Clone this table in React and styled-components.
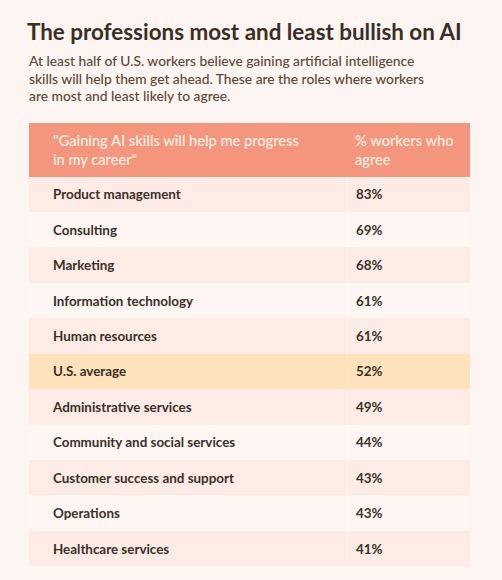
import React from 'react';
import styled, { createGlobalStyle } from 'styled-components';

const GlobalStyle = createGlobalStyle`
  body {
    margin: 0;
    background: #fdf5f1;
    font-family: "Lato", "Noto Sans", sans-serif;
  }
`;

const Page = styled.div`
  width: 502px;
  height: 580px;
  padding: 17px 32px 0 27px;
  box-sizing: border-box;
  background: #fdf5f1;
  color: #3b3028;
`;

const Title = styled.h1`
  margin: 0;
  font-size: 22.4px;
  line-height: 30px;
  font-weight: 700;
  white-space: nowrap;
  color: #3a2e24;
`;

const Intro = styled.p`
  margin: 5px 0 0 2px;
  font-size: 13.8px;
  line-height: 17.5px;
  font-weight: 500;
  white-space: nowrap;
  color: #5b4838;
`;

const Table = styled.div`
  margin: 18px 0 0 2px;
  width: 441px;
  display: grid;
  grid-template-columns: 318px 1fr;
`;

const HeadCell = styled.div`
  background: #f4967e;
  color: #fdeadf;
  font-size: 14.6px;
  line-height: 19px;
  font-weight: 600;
  height: 54px;
  box-sizing: border-box;
  padding: ${p => (p.$first ? '8px 10px 0 24px' : '8px 10px 0 8px')};
`;

const rowBg = { odd: '#fdebe5', even: '#fdf6f3', avg: '#fde2bb' };

const Cell = styled.div`
  background: ${p => rowBg[p.$tone]};
  height: 35.45px;
  display: flex;
  align-items: center;
  font-size: 13.4px;
  font-weight: 700;
  color: #3b3028;
  padding-left: ${p => (p.$first ? '24px' : '8px')};
  border-left: ${p => (p.$first ? 'none' : '1px solid rgba(255,255,255,0.35)')};
`;

const rows = [
  ['Product management', '83%'],
  ['Consulting', '69%'],
  ['Marketing', '68%'],
  ['Information technology', '61%'],
  ['Human resources', '61%'],
  ['U.S. average', '52%', 'avg'],
  ['Administrative services', '49%'],
  ['Community and social services', '44%'],
  ['Customer success and support', '43%'],
  ['Operations', '43%'],
  ['Healthcare services', '41%'],
];

const App = () => (
  <Page>
    <GlobalStyle />
    <Title>The professions most and least bullish on AI</Title>
    <Intro>
      At least half of U.S. workers believe gaining artificial intelligence<br />
      skills will help them get ahead. These are the roles where workers<br />
      are most and least likely to agree.
    </Intro>
    <Table>
      <HeadCell $first>"Gaining AI skills will help me progress<br />in my career"</HeadCell>
      <HeadCell>% workers who<br />agree</HeadCell>
      {rows.map(([name, pct, kind], i) => {
        const tone = kind || (i % 2 === 0 ? 'odd' : 'even');
        return (
          <React.Fragment key={name}>
            <Cell $first $tone={tone}>{name}</Cell>
            <Cell $tone={tone}>{pct}</Cell>
          </React.Fragment>
        );
      })}
    </Table>
  </Page>
);

export default App;
